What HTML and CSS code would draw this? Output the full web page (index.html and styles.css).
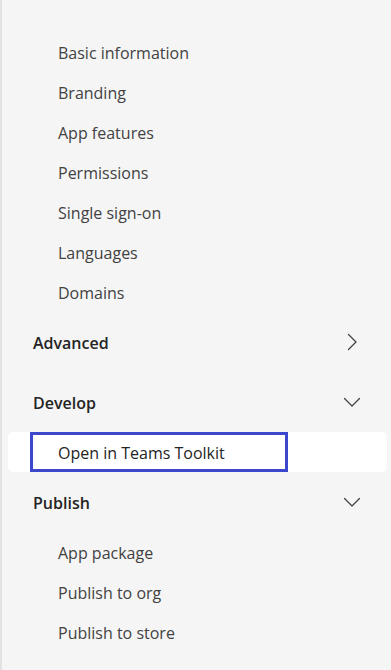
FILE: index.html
```html
<!DOCTYPE html>
<html lang="en">
<head>
<meta charset="utf-8">
<title>App navigation</title>
<link rel="stylesheet" href="styles.css">
</head>
<body>
<nav class="sidebar">
  <ul class="sub-list sub-list--first">
    <li class="sub-item">Basic information</li>
    <li class="sub-item">Branding</li>
    <li class="sub-item">App features</li>
    <li class="sub-item">Permissions</li>
    <li class="sub-item">Single sign-on</li>
    <li class="sub-item">Languages</li>
    <li class="sub-item">Domains</li>
  </ul>

  <section class="group group--collapsed">
    <div class="group-header">
      <span class="group-title">Advanced</span>
      <svg class="chevron" viewBox="0 0 20 20" width="20" height="20" aria-hidden="true"><path d="M6.5 2.5 L14 10 L6.5 17.5" /></svg>
    </div>
  </section>

  <section class="group">
    <div class="group-header">
      <span class="group-title">Develop</span>
      <svg class="chevron" viewBox="0 0 20 20" width="20" height="20" aria-hidden="true"><path d="M2.5 6.5 L10 14 L17.5 6.5" /></svg>
    </div>
    <ul class="sub-list">
      <li class="sub-item sub-item--selected"><span class="focus-link">Open in Teams Toolkit</span></li>
    </ul>
  </section>

  <section class="group">
    <div class="group-header">
      <span class="group-title">Publish</span>
      <svg class="chevron" viewBox="0 0 20 20" width="20" height="20" aria-hidden="true"><path d="M2.5 6.5 L10 14 L17.5 6.5" /></svg>
    </div>
    <ul class="sub-list">
      <li class="sub-item">App package</li>
      <li class="sub-item">Publish to org</li>
      <li class="sub-item">Publish to store</li>
    </ul>
  </section>
</nav>
</body>
</html>
```

FILE: styles.css
```css
html, body {
  margin: 0;
  padding: 0;
  background: #f5f5f5;
}

body {
  font-family: "Open Sans", "Noto Sans", "Liberation Sans", sans-serif;
  font-size: 16px;
  color: #424242;
}

.sidebar {
  min-height: 670px;
  box-sizing: border-box;
  border-left: 2px solid #e3e3e3;
  padding-top: 22px;
}

.sub-list {
  list-style: none;
  margin: 10px 0;
  padding: 0;
}

.sub-item {
  height: 40px;
  box-sizing: border-box;
  display: flex;
  align-items: center;
  padding-left: 56px;
  padding-top: 2px;
  color: #424242;
}

.sub-item--selected {
  background: #ffffff;
  margin-left: 6px;
  margin-right: 4px;
  border-radius: 5px;
  padding-left: 22px;
  padding-top: 0;
  align-items: stretch;
}

.focus-link {
  width: 258px;
  box-sizing: border-box;
  border: 3px solid #3d47cc;
  padding-left: 25px;
  padding-top: 2px;
  display: flex;
  align-items: center;
  color: #242424;
}

.group--collapsed {
  margin-bottom: 20px;
}

.group-header {
  height: 40px;
  box-sizing: border-box;
  display: flex;
  align-items: center;
  justify-content: space-between;
  padding-left: 31px;
  padding-right: 29px;
}

.group-title {
  font-weight: 600;
  color: #242424;
  padding-top: 2px;
}

.chevron {
  display: block;
  fill: none;
  stroke: #424242;
  stroke-width: 1.3;
  stroke-linecap: round;
  stroke-linejoin: round;
}
```
